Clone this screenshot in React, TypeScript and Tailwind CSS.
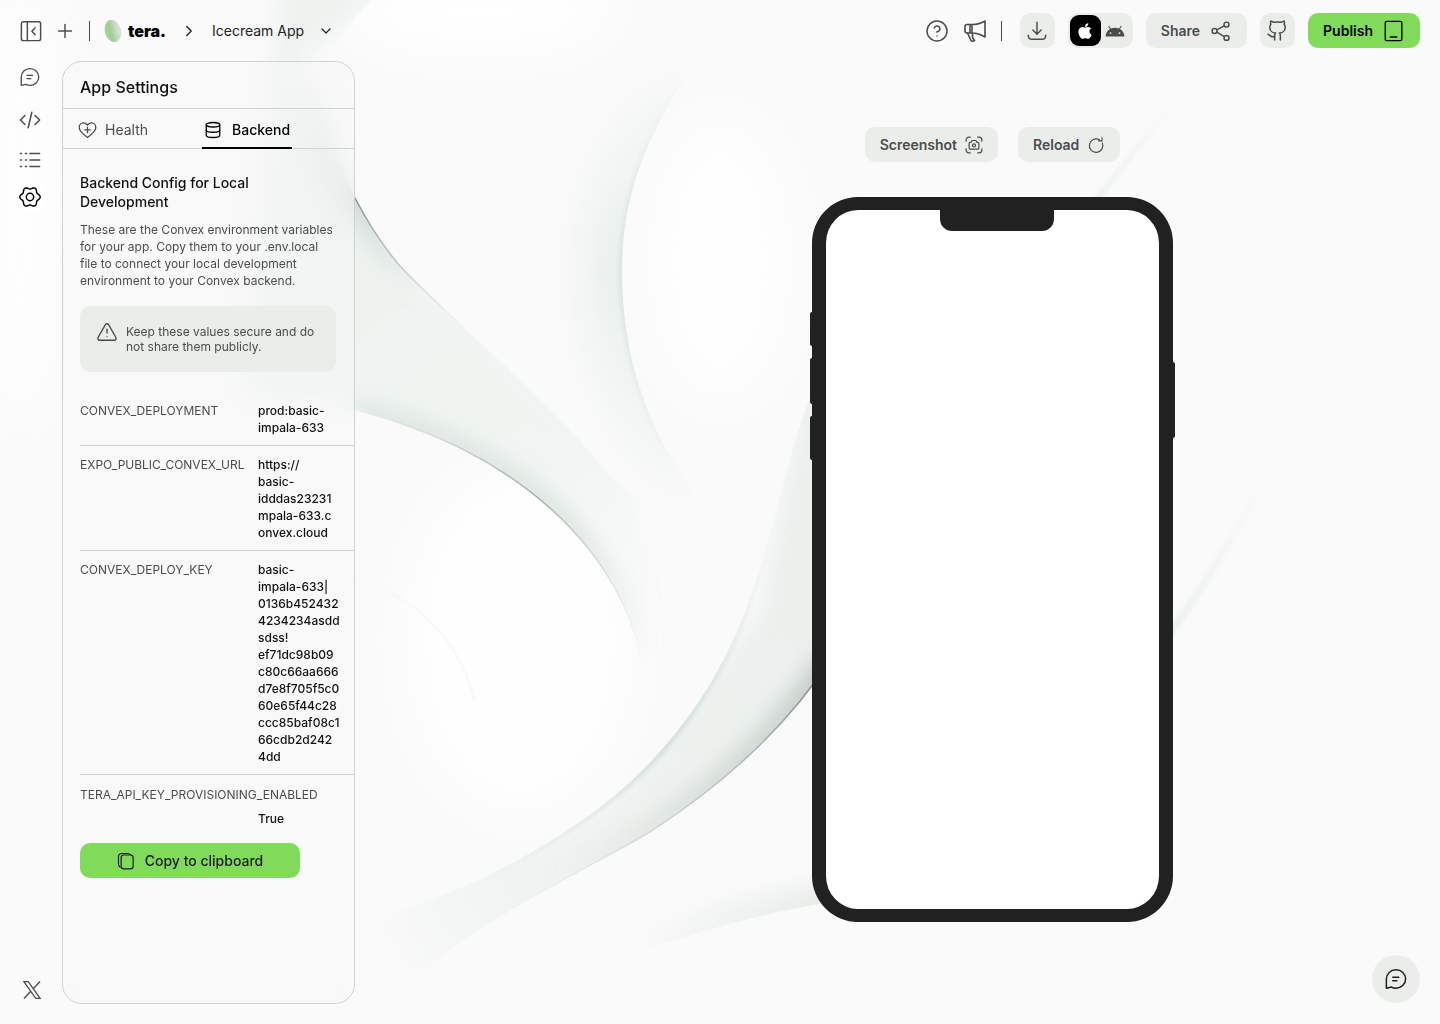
import type { ReactNode } from "react";
import {
  ChevronDown,
  ChevronRight,
  CircleHelp,
  Database,
  Github,
  Plus,
  TriangleAlert,
} from "lucide-react";
import { FaApple } from "react-icons/fa";

interface IconProps {
  className?: string;
  children: ReactNode;
}

const Icon = ({ className, children }: IconProps) => (
  <svg
    viewBox="0 0 24 24"
    fill="none"
    stroke="currentColor"
    strokeWidth={1.6}
    strokeLinecap="round"
    strokeLinejoin="round"
    className={className}
    aria-hidden="true"
  >
    {children}
  </svg>
);

const ChatIcon = ({ className }: { className?: string }) => (
  <Icon className={className}>
    <path d="M1.500 22V12a10.500 10 0 1 1 10.500 10c-2 0-3.600-.4-5-1.200L1.500 22Z" />
    <path d="M8.500 10H15M8.500 14H13" />
  </Icon>
);

// six-lobed gear outline, sampled every 5 degrees
const gearPath =
  "M" +
  Array.from({ length: 72 }, (_, i) => {
    const angle = (i * Math.PI) / 36;
    const radius = 9.9 + 1.2 * Math.cos(6 * angle);
    return `${(12 + radius * Math.cos(angle)).toFixed(2)} ${(12 + radius * Math.sin(angle)).toFixed(2)}`;
  }).join("L") +
  "Z";

const envVars = [
  { name: "CONVEX_DEPLOYMENT", value: "prod:basic-\nimpala-633" },
  {
    name: "EXPO_PUBLIC_CONVEX_URL",
    value: "https://\nbasic-\nidddas23231\nmpala-633.c\nonvex.cloud",
  },
  {
    name: "CONVEX_DEPLOY_KEY",
    value:
      "basic-\nimpala-633|\n0136b452432\n4234234asdd\nsdss!\nef71dc98b09\nc80c66aa666\nd7e8f705f5c0\n60e65f44c28\nccc85baf08c1\n66cdb2d242\n4dd",
  },
];

const bandTop =
  "M355 198C368 223 382 245 400 266C450 320 540 390 600 464C640 514 660 570 672 640";
const bandBottom =
  "M355 410C440 432 500 464 550 508C610 562 644 630 644 692";
const waveTop =
  "M812 390C786 460 775 530 745 612C715 690 665 760 590 815C540 850 490 878 420 904";
const waveBottom =
  "M830 660C790 722 730 780 650 832C580 874 450 930 375 1015";

const Backdrop = () => (
  <svg
    className="absolute inset-0 -z-10 h-full w-full"
    viewBox="0 0 1440 1024"
    preserveAspectRatio="xMidYMid slice"
    aria-hidden="true"
  >
    <defs>
      <filter id="soft" filterUnits="userSpaceOnUse" x="-100" y="-100" width="1640" height="1240">
        <feGaussianBlur stdDeviation="24" />
      </filter>
      <filter id="mid" filterUnits="userSpaceOnUse" x="-100" y="-100" width="1640" height="1240">
        <feGaussianBlur stdDeviation="10" />
      </filter>
      <filter id="fine" filterUnits="userSpaceOnUse" x="-100" y="-100" width="1640" height="1240">
        <feGaussianBlur stdDeviation="2" />
      </filter>
      <clipPath id="band">
        <path d="M0 0H372C318 50 316 120 355 198C368 223 382 245 400 266C450 320 540 390 600 464C640 514 760 570 760 800H600C644 760 644 720 644 692C644 630 610 562 550 508C500 464 440 432 355 410L200 390Z" />
      </clipPath>
      <clipPath id="wave">
        <path d="M812 390C786 460 775 530 745 612C715 690 665 760 590 815C540 850 490 878 420 904L300 940V1024H367C450 930 580 874 650 832C730 780 790 722 830 660V390Z" />
      </clipPath>
      <clipPath id="outer">
        <path d="M760 -10C660 90 622 180 622 270C622 380 660 470 760 570L820 650H500L380 0Z" />
      </clipPath>
      <clipPath id="above">
        <path d="M860 898C780 908 690 930 560 982V760H860Z" />
      </clipPath>
      <linearGradient id="darkLeft" gradientUnits="userSpaceOnUse" x1="355" y1="198" x2="470" y2="330">
        <stop stopColor="#8a918d" />
        <stop offset="1" stopColor="#a9b3ad" stopOpacity="0" />
      </linearGradient>
      <linearGradient id="darkMid" gradientUnits="userSpaceOnUse" x1="355" y1="410" x2="645" y2="670">
        <stop stopColor="#b5beb9" stopOpacity="0" />
        <stop offset=".5" stopColor="#a4ada8" />
        <stop offset="1" stopColor="#dbe2de" stopOpacity="0" />
      </linearGradient>
      <linearGradient id="darkWave" gradientUnits="userSpaceOnUse" x1="820" y1="680" x2="500" y2="920">
        <stop stopColor="#8a918d" />
        <stop offset="1" stopColor="#cfd8d3" stopOpacity="0" />
      </linearGradient>
      <linearGradient id="waveFill" gradientUnits="userSpaceOnUse" x1="820" y1="640" x2="390" y2="990">
        <stop stopColor="#ebf0ed" />
        <stop offset=".7" stopColor="#eff3f1" />
        <stop offset="1" stopColor="#fafafa" />
      </linearGradient>
      <linearGradient id="waveShade" gradientUnits="userSpaceOnUse" x1="820" y1="680" x2="560" y2="870">
        <stop stopColor="#c3ccc7" />
        <stop offset="1" stopColor="#c3ccc7" stopOpacity="0" />
      </linearGradient>
      <linearGradient id="waveRim" gradientUnits="userSpaceOnUse" x1="770" y1="540" x2="480" y2="880">
        <stop stopColor="#d3ddd7" stopOpacity="0" />
        <stop offset=".5" stopColor="#d3ddd7" />
        <stop offset="1" stopColor="#d3ddd7" stopOpacity="0" />
      </linearGradient>
      <linearGradient id="bandFill" gradientUnits="userSpaceOnUse" x1="300" y1="230" x2="650" y2="660">
        <stop stopColor="#eef3f0" />
        <stop offset=".6" stopColor="#f0f4f2" />
        <stop offset="1" stopColor="#f2f6f4" stopOpacity="0" />
      </linearGradient>
      <linearGradient id="bandShade" gradientUnits="userSpaceOnUse" x1="355" y1="410" x2="645" y2="670">
        <stop stopColor="#dfe6e2" />
        <stop offset=".6" stopColor="#dce4df" />
        <stop offset="1" stopColor="#dce4df" stopOpacity="0" />
      </linearGradient>
      <linearGradient id="cornerShade" gradientUnits="userSpaceOnUse" x1="330" y1="80" x2="420" y2="290">
        <stop stopColor="#ced7d2" stopOpacity="0" />
        <stop offset=".5" stopColor="#ced7d2" />
        <stop offset="1" stopColor="#ced7d2" stopOpacity="0" />
      </linearGradient>
      <linearGradient id="hollowShade" gradientUnits="userSpaceOnUse" x1="0" y1="50" x2="0" y2="530">
        <stop stopColor="#e6eeea" stopOpacity="0" />
        <stop offset=".45" stopColor="#e6eeea" />
        <stop offset="1" stopColor="#e6eeea" stopOpacity="0" />
      </linearGradient>
      <linearGradient id="hollowRim" gradientUnits="userSpaceOnUse" x1="0" y1="80" x2="0" y2="470">
        <stop stopColor="#dae3de" stopOpacity="0" />
        <stop offset=".5" stopColor="#dae3de" />
        <stop offset="1" stopColor="#dae3de" stopOpacity="0" />
      </linearGradient>
      <linearGradient id="lowerShade" gradientUnits="userSpaceOnUse" x1="830" y1="0" x2="630" y2="0">
        <stop stopColor="#dde6e1" />
        <stop offset="1" stopColor="#dde6e1" stopOpacity="0" />
      </linearGradient>
      <linearGradient id="ray" gradientUnits="userSpaceOnUse" x1="1168" y1="636" x2="1290" y2="440">
        <stop stopColor="#e9f0ec" />
        <stop offset="1" stopColor="#f4f6f5" stopOpacity="0" />
      </linearGradient>
      <linearGradient id="rayTop" gradientUnits="userSpaceOnUse" x1="1096" y1="200" x2="1200" y2="70">
        <stop stopColor="#e9f0ec" />
        <stop offset="1" stopColor="#f4f6f5" stopOpacity="0" />
      </linearGradient>
    </defs>
    <rect width="1440" height="1024" fill="#fafafa" />
    <ellipse cx="480" cy="10" rx="130" ry="40" fill="#fff" filter="url(#soft)" />
    <ellipse cx="720" cy="260" rx="70" ry="140" fill="#fff" opacity=".8" filter="url(#soft)" />
    <ellipse cx="520" cy="640" rx="110" ry="170" fill="#fff" opacity=".9" filter="url(#soft)" />
    <ellipse cx="20" cy="200" rx="50" ry="220" fill="#fff" opacity=".7" filter="url(#soft)" />

    <g clipPath="url(#outer)">
      <path d="M760 -10C660 90 622 180 622 270C622 380 660 470 760 570" stroke="url(#hollowShade)" strokeWidth="70" fill="none" filter="url(#soft)" />
      <path d="M760 -10C660 90 622 180 622 270C622 380 660 470 760 570" stroke="url(#hollowRim)" strokeWidth="6" fill="none" filter="url(#fine)" />
    </g>
    <g clipPath="url(#band)">
      <path d="M280 -20L240 430L400 450L560 540L640 700L720 760L620 464L400 256L360 190L300 60L400 -20Z" fill="url(#bandFill)" filter="url(#mid)" />
      <path d="M318 60C316 120 330 160 355 198C368 223 382 245 400 266C410 278 430 298 450 316" stroke="url(#cornerShade)" strokeWidth="26" fill="none" filter="url(#mid)" />
      <path d={bandBottom} stroke="url(#bandShade)" strokeWidth="22" fill="none" filter="url(#mid)" />
    </g>
    <path d={bandTop} stroke="url(#darkLeft)" strokeWidth="1.500" fill="none" />
    <path d={bandBottom} stroke="url(#darkMid)" strokeWidth="1.500" fill="none" />

    <g clipPath="url(#wave)">
      <path d="M800 400L760 612L600 815L330 940V1040L650 860L850 700V400Z" fill="url(#waveFill)" filter="url(#mid)" />
      <path d={waveTop} stroke="url(#waveRim)" strokeWidth="7" fill="none" filter="url(#fine)" />
      <path d={waveBottom} stroke="url(#waveShade)" strokeWidth="26" fill="none" filter="url(#mid)" />
    </g>
    <path d={waveBottom} stroke="url(#darkWave)" strokeWidth="1.500" fill="none" />

    <g clipPath="url(#above)">
      <path d="M900 894C780 908 690 930 600 966" stroke="url(#lowerShade)" strokeWidth="40" fill="none" filter="url(#mid)" opacity=".7" />
    </g>
    <path d="M355 577C420 600 460 640 474 700" stroke="#f7f8f8" strokeWidth="2" fill="none" />
    <path d="M1096 200C1130 160 1160 115 1200 70" stroke="url(#rayTop)" strokeWidth="5" fill="none" filter="url(#fine)" />
    <path d="M1168 636C1220 565 1245 510 1290 440" stroke="url(#ray)" strokeWidth="7" fill="none" filter="url(#fine)" />
  </svg>
);

const Logo = () => (
  <a href="#" className="flex items-center gap-1.5 text-black">
    <svg viewBox="0 0 20 26" className="h-6 w-[18px]" aria-hidden="true">
      <defs>
        <linearGradient id="shell" x1="0" y1="0" x2="1" y2="0">
          <stop stopColor="#8fc97c" />
          <stop offset=".35" stopColor="#86c272" />
          <stop offset=".7" stopColor="#c3cdc4" />
          <stop offset="1" stopColor="#dcdfdd" />
        </linearGradient>
        <pattern id="dots" width="2" height="2" patternUnits="userSpaceOnUse" patternTransform="rotate(32)">
          <circle cx="1" cy="1" r=".6" fill="#f4f8f3" />
        </pattern>
      </defs>
      <g transform="rotate(-14 10 13)">
        <ellipse cx="10" cy="13" rx="9" ry="12.500" fill="url(#shell)" />
        <ellipse cx="10" cy="13" rx="9" ry="12.500" fill="url(#dots)" />
      </g>
    </svg>
    <span className="text-base leading-5 font-black">tera.</span>
  </a>
);

const Header = () => (
  <header className="flex h-[61px] items-center justify-between px-5 text-[#4a4d4b]">
    <div className="flex items-center">
      <button aria-label="Collapse sidebar" className="mr-3">
        <Icon className="size-[22px]">
          <rect x="1.500" y="2" width="21" height="20.500" rx="2" />
          <path d="M8 2v20.500M16.500 8.500l-3.500 3.700 3.500 3.800" />
        </Icon>
      </button>
      <button aria-label="New project">
        <Plus className="size-[22px]" strokeWidth={1.6} />
      </button>
      <span className="mr-3.5 ml-[13px] h-5 w-px bg-[#4a4d4b]" />
      <Logo />
      <ChevronRight className="mx-3.5 size-[18px] text-[#222]" strokeWidth={1.8} />
      <button className="flex items-center gap-3.5 text-sm leading-5 text-[#222]">
        Icecream App
        <ChevronDown className="size-4" strokeWidth={1.8} />
      </button>
    </div>
    <div className="flex items-center gap-[13px]">
      <div className="mr-[5px] flex items-center gap-3.5">
        <button aria-label="Help">
          <CircleHelp className="size-6" strokeWidth={1.5} />
        </button>
        <button aria-label="Announcements">
          <Icon className="size-6">
            <path d="M2 7.500Q2 5.500 4 5.500H9V14H4Q2 14 2 12ZM7 5.500V14M9 5.500C14 5.500 18 4.500 22 2V18C18 15.500 14 14 9 14" />
            <path d="M4.500 14L8 21.500Q8.600 22.500 9.800 22.200L11.500 21.500L9.500 18.500V14" />
          </Icon>
        </button>
        <span className="h-5 w-px bg-[#4a4d4b]" />
      </div>
      <button
        aria-label="Download"
        className="flex size-[35px] items-center justify-center rounded-[10px] bg-[#ebedeb]"
      >
        <Icon className="size-[22px]">
          <path d="M12 2.500V15M7.500 11l4.500 4.500 4.500-4.500M2.500 16.500c0 3 1.500 4.500 4 4.500h11c2.500 0 4-1.500 4-4.500" />
        </Icon>
      </button>
      <div className="flex h-[35px] items-center gap-1 rounded-[10px] bg-[#ebedeb] pr-2 pl-0.5">
        <button
          aria-label="iOS"
          className="flex h-[31px] w-[31px] items-center justify-center rounded-[9px] bg-black text-white"
        >
          <FaApple className="size-[18px]" />
        </button>
        <button aria-label="Android">
          <svg viewBox="0 0 20 12" className="h-3 w-5" aria-hidden="true">
            <path
              fill="#4a4d4b"
              fillRule="evenodd"
              d="M.500 11.500C.800 8 2.500 5.500 5 4L3.300 1.200 4.200.700 5.900 3.600a10 10 0 0 1 8.200 0L15.800.700l.900.500L15 4c2.500 1.500 4.200 4 4.500 7.500ZM5.500 9a.900.900 0 1 0 0-1.800.900.900 0 0 0 0 1.800Zm9 0a.900.900 0 1 0 0-1.800.900.900 0 0 0 0 1.800Z"
            />
          </svg>
        </button>
      </div>
      <button className="flex h-[35px] items-center gap-2.5 rounded-[10px] bg-[#ebedeb] px-[15px] text-sm leading-5 font-semibold">
        Share
        <Icon className="size-[22px]">
          <circle cx="18" cy="5" r="2.700" />
          <circle cx="5" cy="12" r="2.700" />
          <circle cx="18" cy="19.500" r="2.700" />
          <path d="M7.500 10.700l8-4.400M7.500 13.300l8 4.900" />
        </Icon>
      </button>
      <button
        aria-label="GitHub"
        className="flex size-[35px] items-center justify-center rounded-[10px] bg-[#ebedeb]"
      >
        <Github className="size-[23px]" strokeWidth={1.6} />
      </button>
      <button className="flex h-[35px] items-center gap-2.5 rounded-[10px] bg-[#80db5b] px-[15px] text-sm leading-5 font-semibold text-black">
        Publish
        <Icon className="size-[22px]">
          <rect x="2.500" y="1.500" width="18" height="21" rx="1.500" />
          <path d="M8 18.500h7" />
        </Icon>
      </button>
    </div>
  </header>
);

const Rail = () => (
  <nav className="flex w-[62px] shrink-0 flex-col items-center pr-0.5 pb-[5px] text-[#4a4d4b]">
    <button aria-label="Chat" className="mt-1.5">
      <ChatIcon className="size-5" />
    </button>
    <button aria-label="Code" className="mt-[22px]">
      <Icon className="size-[22px]">
        <path d="M6.500 7L1.500 12l5 5M17.500 7l5 5-5 5M14 3.500L10 20.500" />
      </Icon>
    </button>
    <button aria-label="Logs" className="mt-[18px]">
      <Icon className="size-[22px]">
        <path d="M1.500 5h1.200M7 5h1.200M12 5h10.500M1.500 12h1.200M7 12h1.200M12 12h10.500M1.500 19h1.200M7 19h1.200M12 19h10.500" />
      </Icon>
    </button>
    <button
      aria-label="Settings"
      className="mt-3 flex size-7 items-center justify-center rounded-md bg-white text-black"
    >
      <Icon className="size-[22px]">
        <path d={gearPath} />
        <circle cx="12" cy="12" r="4" />
      </Icon>
    </button>
    <a href="#" aria-label="X" className="mt-auto ml-1">
      <svg
        viewBox="0 0 18 18"
        fill="none"
        stroke="currentColor"
        strokeWidth={1.3}
        className="size-[18px]"
        aria-hidden="true"
      >
        <path d="M.900.700H5.200L17.100 17.300H12.800ZM17 .500L10.300 7.800M1 17.500L7.800 10.200" />
      </svg>
    </a>
  </nav>
);

const SettingsPanel = () => (
  <aside className="w-[293px] shrink-0 overflow-hidden rounded-[20px] border border-[#cdd3d0] bg-[#f8f8f8]/40 pl-[17px] backdrop-blur-md">
    <h1 className="-ml-[17px] h-[47px] border-b border-[#cdd3d0] pt-[13px] pl-[17px] text-base leading-6 font-medium text-[#111]">
      App Settings
    </h1>
    <div
      role="tablist"
      className="-ml-[17px] flex h-10 items-stretch border-b border-[#cdd3d0] pl-[15px] text-sm leading-5"
    >
      <button
        role="tab"
        aria-selected="false"
        className="flex items-center gap-2 pt-0.5 text-[#4a4d4b]"
      >
        <Icon className="size-[19px]">
          <path d="M12 22C7 18.500 1.500 14.500 1.500 9.500C1.500 6 3.800 3.500 6.800 3.500C9 3.500 10.500 4.700 12 6.300C13.500 4.700 15 3.500 17.200 3.500C20.200 3.500 22.500 6 22.500 9.500C22.500 14.500 17 18.500 12 22Z" />
          <path d="M12 9v7M8.500 12.500h7" />
        </Icon>
        Health
      </button>
      <button
        role="tab"
        aria-selected="true"
        className="-mb-px ml-[54px] flex items-center gap-2.5 border-b-2 border-black px-0.5 pt-[3px] font-medium text-black"
      >
        <Database className="size-[18px]" strokeWidth={1.7} />
        Backend
      </button>
    </div>

    <section className="pt-6">
      <h2 className="w-[200px] text-sm leading-[19px] font-medium text-[#111]">
        Backend Config for Local Development
      </h2>
      <p className="mt-[10px] w-[256px] text-xs leading-[17px] text-[#4a4d4b]">
        These are the Convex environment variables for your app. Copy them to
        your .env.local file to connect your local development environment to
        your Convex backend.
      </p>
      <div
        role="note"
        className="mt-[17px] mr-[18px] flex gap-2 rounded-[10px] bg-[#ebedeb] py-[18px] pr-3 pl-4 text-xs leading-[15px] text-[#4a4d4b]"
      >
        <TriangleAlert className="-mt-[3px] size-[22px] shrink-0" strokeWidth={1.5} />
        <p>Keep these values secure and do not share them publicly.</p>
      </div>

      <dl className="mt-5 text-xs leading-[17px]">
        {envVars.map((env) => (
          <div key={env.name} className="flex border-b border-[#cdd3d0] pt-[10px] pb-[9px]">
            <dt className="w-[178px] shrink-0 text-[#4a4d4b]">{env.name}</dt>
            <dd className="font-medium whitespace-pre-line text-[#111]">{env.value}</dd>
          </div>
        ))}
        <div className="pt-[11px]">
          <dt className="text-[#4a4d4b]">TERA_API_KEY_PROVISIONING_ENABLED</dt>
          <dd className="mt-[7px] ml-[178px] font-medium text-[#111]">True</dd>
        </div>
      </dl>

      <button className="mt-4 flex h-[35px] w-[220px] items-center justify-center gap-2.5 rounded-[10px] bg-[#80db5b] text-sm leading-5 font-medium text-[#1b1b1b]">
        <Icon className="size-[18px]">
          <rect x="5.500" y="4" width="16" height="18.500" rx="3.500" />
          <path d="M4 20C2.500 19 2 17.800 2 16V6.500C2 3.500 3.500 2 6.500 2H14C16 2 17.500 2.500 18.500 4" />
        </Icon>
        Copy to clipboard
      </button>
    </section>
  </aside>
);

const Phone = () => (
  <div className="relative mt-[35px] h-[725px] w-[361px] rounded-[46px] border-x-14 border-y-13 border-[#212121] bg-white">
    <span className="absolute -top-px left-[114px] h-[22px] w-[114px] rounded-b-xl bg-[#212121]" />
    <span className="absolute top-[102px] -left-4 h-[34px] w-1 rounded-l-xs bg-[#212121]" />
    <span className="absolute top-[148px] -left-4 h-[46px] w-1 rounded-l-xs bg-[#212121]" />
    <span className="absolute top-[206px] -left-4 h-11 w-1 rounded-l-xs bg-[#212121]" />
    <span className="absolute top-[152px] -right-4 h-[76px] w-1 rounded-r-xs bg-[#212121]" />
  </div>
);

const Preview = () => (
  <main className="flex flex-1 flex-col items-center pt-[66px] pl-[190px]">
    <div className="flex gap-5 text-sm leading-5 font-semibold text-[#4a4d4b]">
      <button className="flex h-[35px] items-center gap-2 rounded-[10px] bg-[#ebedeb] px-[15px]">
        Screenshot
        <Icon className="size-[18px]">
          <path d="M1.500 7V5.500Q1.500 1.500 5.500 1.500H7M17 1.500h1.500q4 0 4 4V7M22.500 17v1.500q0 4-4 4H17M7 22.500H5.500q-4 0-4-4V17" />
          <path d="M5.500 10Q5.500 8.500 7 8.500H8L9.500 6h5L16 8.500h1Q18.500 8.500 18.500 10v6q0 1.500-1.500 1.500H7Q5.500 17.500 5.500 16Z" />
          <circle cx="12" cy="12.500" r="2" />
        </Icon>
      </button>
      <button className="flex h-[35px] items-center gap-2 rounded-[10px] bg-[#ebedeb] px-[15px]">
        Reload
        <Icon className="size-[18px]">
          <path d="M16.500 5A9 9 0 1 0 20.500 9.500M20 2.500V6.500H15.500" />
        </Icon>
      </button>
    </div>
    <Phone />
  </main>
);

export default function App() {
  return (
    <div className="relative isolate flex min-h-screen flex-col overflow-hidden font-['Inter',sans-serif]">
      <Backdrop />
      <Header />
      <div className="flex flex-1 pb-5">
        <Rail />
        <SettingsPanel />
        <Preview />
      </div>
      <button
        aria-label="Open support chat"
        className="fixed right-5 bottom-[21px] flex size-12 items-center justify-center rounded-full bg-[#ebedeb] text-[#1b1b1b]"
      >
        <ChatIcon className="size-[22px]" />
      </button>
    </div>
  );
}
